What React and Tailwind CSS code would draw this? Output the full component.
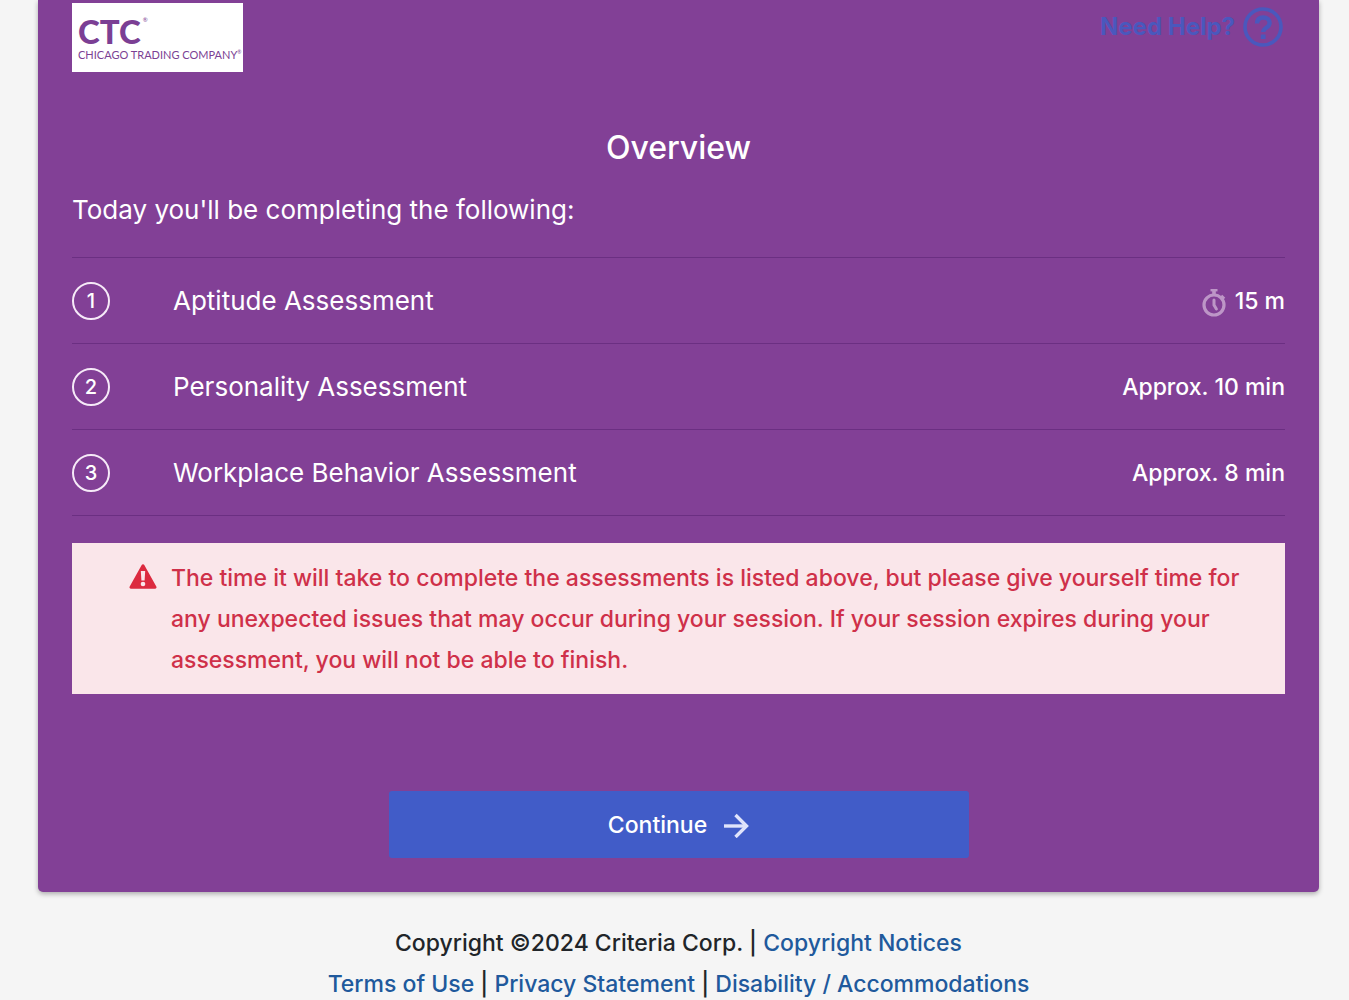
const assessments = [
  { name: "Aptitude Assessment", time: "15 m", timed: true },
  { name: "Personality Assessment", time: "Approx. 10 min" },
  { name: "Workplace Behavior Assessment", time: "Approx. 8 min" },
];

function Logo() {
  return (
    <div className="flex h-[69px] w-[171px] flex-col bg-white pt-[11px] pl-[6px] font-['Lato',sans-serif] text-[#7b3f94]">
      <div className="flex items-start gap-[2px]">
        <span className="text-[33px] leading-[34px] font-black">CTC</span>
        <span className="mt-[2px] text-[6px] leading-2">®</span>
      </div>
      <div className="flex items-start whitespace-nowrap">
        <span className="text-[11px] leading-[14px]">CHICAGO TRADING COMPANY</span>
        <span className="text-[5px] leading-2">®</span>
      </div>
    </div>
  );
}

function HelpIcon() {
  return (
    <svg width="40" height="40" viewBox="0 0 40 40" fill="none" stroke="currentColor" aria-hidden="true">
      <circle cx="20" cy="20" r="18" strokeWidth="3.6" />
      <path d="M14 16.500c.2-4 2.600-6 6.200-6 3.800 0 6.400 2.200 6.400 5.400 0 4.900-6.400 4.700-6.400 9.100" strokeWidth="4.400" />
      <path d="M20.200 27.500v4.500" strokeWidth="4.800" />
    </svg>
  );
}

function StopwatchIcon() {
  return (
    <svg width="24" height="28" viewBox="0 0 24 28" fill="none" stroke="currentColor" aria-hidden="true">
      <circle cx="12" cy="16" r="10" strokeWidth="3.200" />
      <path d="M8.500 1.200h7" strokeWidth="2.400" />
      <path d="M12 2v4" strokeWidth="3.600" />
      <path d="M19.200 6.800l3 3" strokeWidth="3" />
      <path d="M12 11v5l2.400 4" strokeWidth="3" strokeLinecap="round" />
    </svg>
  );
}

function WarningIcon() {
  return (
    <svg width="28" height="25" viewBox="0 0 28 25" aria-hidden="true">
      <path d="M12.700 1.100a1.500 1.500 0 0 1 2.600 0l12 21.300a1.500 1.500 0 0 1-1.300 2.300H2a1.500 1.500 0 0 1-1.300-2.300z" fill="#dc2a3f" />
      <path d="M11.800 7h4.400l-.6 9.500h-3.200z" fill="#fae6ea" />
      <circle cx="14" cy="20" r="2.300" fill="#fae6ea" />
    </svg>
  );
}

function ArrowIcon() {
  return (
    <svg width="26" height="26" viewBox="0 0 26 26" fill="none" stroke="#e0e4fb" strokeWidth="3.400" aria-hidden="true">
      <path d="M1 14h22" />
      <path d="M12.500 3l11 11-11 11" />
    </svg>
  );
}

export default function App() {
  return (
    <div className="overflow-hidden bg-[#f5f5f5] font-['Inter',sans-serif] text-[#212529]">
      <main className="mr-[30px] ml-[38px] rounded-b-[5px] bg-[#824096] px-[34px] pt-[3px] pb-[34px] text-white shadow-[0_2px_5px_rgba(0,0,0,0.3)]">
        <header className="flex items-start justify-between">
          <Logo />
          <a href="#help" className="mt-1 mr-[2px] flex items-center gap-2 text-[24px] leading-10 font-bold text-[#4a58bd]">
            Need Help?
            <HelpIcon />
          </a>
        </header>

        <h1 className="mt-14 text-center text-[32px] leading-10 font-medium">Overview</h1>
        <p className="mt-[22px] text-[26px] leading-10">Today you'll be completing the following:</p>

        <ol className="mt-[27px] border-t border-[#6b2f82]">
          {assessments.map((item, index) => (
            <li key={item.name} className="flex h-[86px] items-center border-b border-[#6b2f82]">
              <span className="mr-[63px] flex size-[38px] items-center justify-center rounded-full border-2 border-[#f6eaf8] text-[20px] leading-6 font-medium">
                {index + 1}
              </span>
              <span className="grow text-[26px] leading-10">{item.name}</span>
              <span className="flex items-center gap-[9px] text-[23px] leading-8 font-medium">
                {item.timed && (
                  <span className="mt-1 text-[#bd96c7]">
                    <StopwatchIcon />
                  </span>
                )}
                {item.time}
              </span>
            </li>
          ))}
        </ol>

        <div className="mt-[27px] flex gap-[14px] bg-[#fae6ea] pt-[15px] pr-8 pb-[13px] pl-[57px] text-[#cf3049]">
          <span className="mt-[6px] shrink-0">
            <WarningIcon />
          </span>
          <p className="text-[23px] leading-[41px] font-medium">
            The time it will take to complete the assessments is listed above, but please give yourself time for any
            unexpected issues that may occur during your session. If your session expires during your assessment, you
            will not be able to finish.
          </p>
        </div>

        <button
          type="button"
          className="mx-auto mt-[97px] flex h-[67px] w-[580px] max-w-full items-center justify-center gap-4 rounded-[3px] bg-[#415cc8] text-[23px] leading-8 font-medium"
        >
          Continue
          <ArrowIcon />
        </button>
      </main>

      <footer className="mt-[31px] mr-[30px] ml-[38px] text-center text-[23px] leading-[41px] font-medium">
        <p>
          Copyright ©2024 Criteria Corp. | <a href="#copyright" className="text-[#20599c]">Copyright Notices</a>
        </p>
        <p>
          <a href="#terms" className="text-[#20599c]">Terms of Use</a> |{" "}
          <a href="#privacy" className="text-[#20599c]">Privacy Statement</a> |{" "}
          <a href="#accommodations" className="text-[#20599c]">Disability / Accommodations</a>
        </p>
      </footer>
    </div>
  );
}
